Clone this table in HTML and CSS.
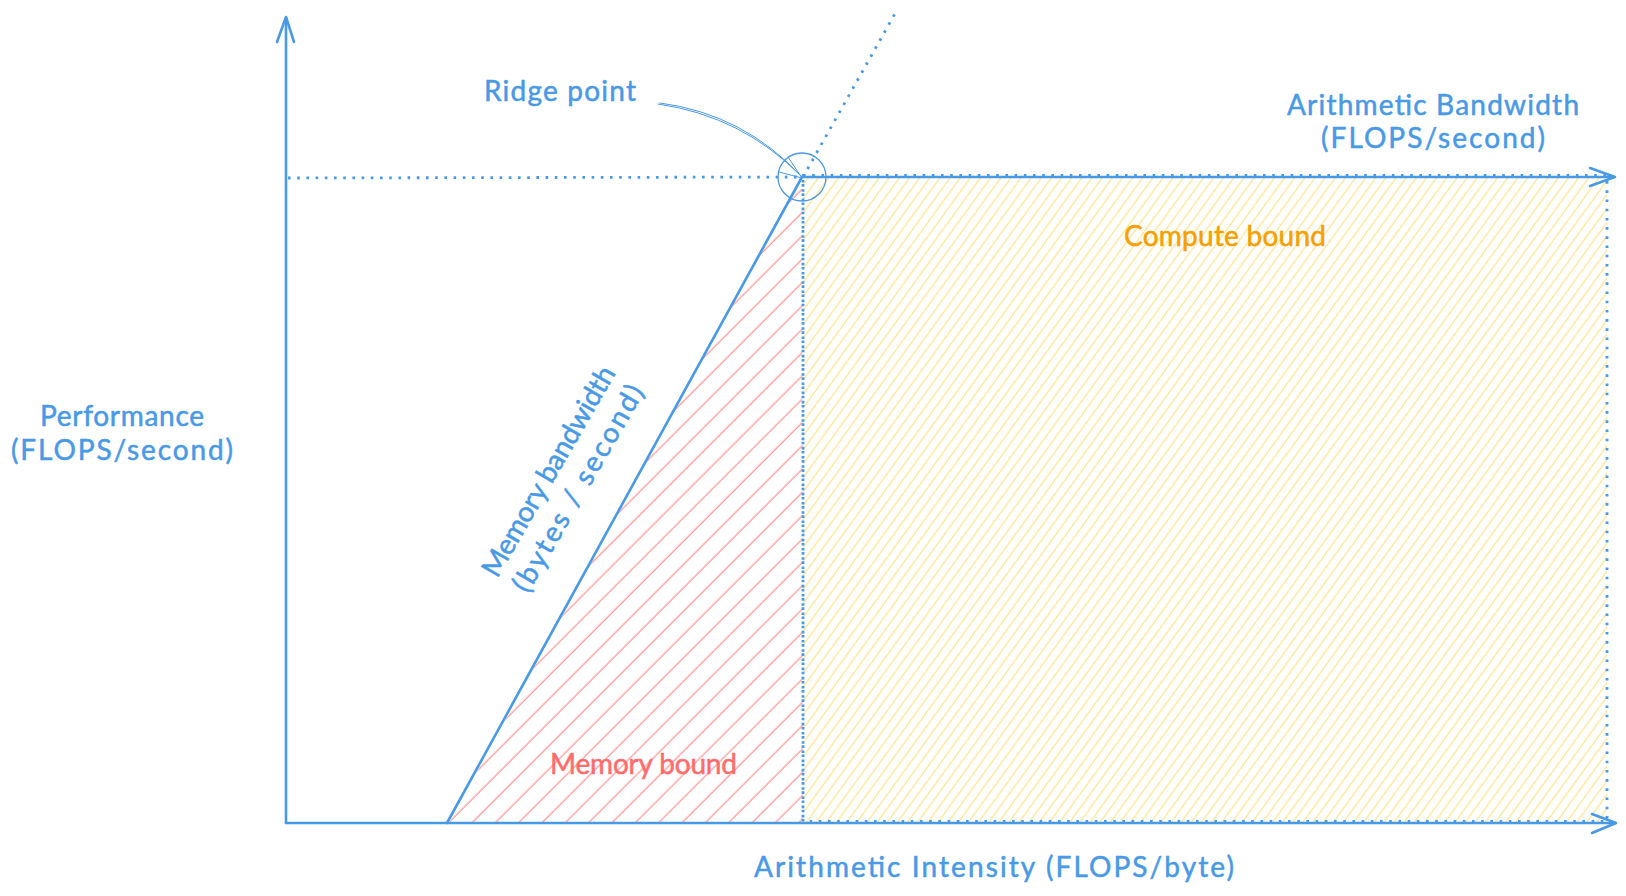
FILE: index.html
```html
<!DOCTYPE html>
<html lang="en">
<head>
<meta charset="utf-8">
<title>Roofline model</title>
<link rel="stylesheet" href="styles.css">
</head>
<body>
<svg class="canvas" width="1626" height="896" viewBox="0 0 1626 896" xmlns="http://www.w3.org/2000/svg">
  <defs>
    <pattern id="hatchRed" class="hatch-red" width="16.5" height="16.5" patternUnits="userSpaceOnUse" patternTransform="rotate(45)">
      <line x1="8" y1="0" x2="8" y2="16.5"></line>
    </pattern>
    <pattern id="hatchYellow" class="hatch-yellow" width="8.2" height="8.2" patternUnits="userSpaceOnUse" patternTransform="rotate(36)">
      <line x1="4" y1="0" x2="4" y2="8.2"></line>
    </pattern>
  </defs>

  <!-- regions -->
  <polygon class="fill-red" points="449,823 802,178 803,823"></polygon>
  <rect class="fill-yellow" x="803" y="178" width="804" height="645"></rect>

  <!-- dotted guides -->
  <line class="stroke dotted" x1="288" y1="178" x2="800" y2="177"></line>
  <line class="stroke dotted" x1="803" y1="177" x2="897" y2="10"></line>
  <line class="stroke dotted" x1="803" y1="180" x2="803" y2="821"></line>
  <rect class="stroke dotted" x="803" y="175.5" width="804" height="646"></rect>

  <!-- axes -->
  <path class="stroke" d="M286 823 L286 18"></path>
  <path class="stroke" d="M277 42 L286 17 L294 42"></path>
  <path class="stroke" d="M286 823 L1615 823"></path>
  <path class="stroke" d="M1592 814 L1616 823 L1592 833"></path>

  <!-- roofline -->
  <path class="stroke" d="M447 823 L802 177 L1614 177"></path>
  <path class="stroke" d="M1590 168 L1615 177 L1590 186"></path>

  <!-- ridge point marker -->
  <circle class="stroke thin" cx="802" cy="177" r="24"></circle>
  <path class="stroke thinner" d="M658 104 Q742 116 801 176"></path>
  <path class="stroke thinner" d="M660 103 Q744 114 802 177"></path>
  <path class="stroke thinner" d="M779 172 L802 178 L788 157"></path>

  <!-- labels -->
  <text class="label" x="484" y="101" textLength="152" lengthAdjust="spacing">Ridge point</text>
  <text class="label" x="1287" y="115" textLength="292" lengthAdjust="spacing">Arithmetic Bandwidth</text>
  <text class="label" x="1321" y="148" textLength="224" lengthAdjust="spacing">(FLOPS/second)</text>
  <text class="label label-orange" x="1124" y="246" textLength="202" lengthAdjust="spacing">Compute bound</text>
  <text class="label" x="40" y="426" textLength="164" lengthAdjust="spacing">Performance</text>
  <text class="label" x="11" y="460" textLength="222" lengthAdjust="spacing">(FLOPS/second)</text>
  <text class="label label-red" x="550" y="774" textLength="187" lengthAdjust="spacing">Memory bound</text>
  <text class="label" x="754" y="877" textLength="480" lengthAdjust="spacing">Arithmetic Intensity (FLOPS/byte)</text>

  <g transform="translate(562.8 479.5) rotate(-60)">
    <text class="label mid" x="0" y="-7" textLength="238" lengthAdjust="spacing">Memory bandwidth</text>
    <text class="label mid" x="0" y="27" textLength="234" lengthAdjust="spacing">(bytes / second)</text>
  </g>
</svg>
</body>
</html>
```

FILE: styles.css
```css
html, body {
  margin: 0;
  padding: 0;
  background: #ffffff;
}

.canvas {
  display: block;
  width: 1626px;
  height: 896px;
}

.stroke {
  fill: none;
  stroke: #4899e6;
  stroke-width: 2.6;
  stroke-linecap: round;
  stroke-linejoin: round;
}

.thin {
  stroke-width: 1.3;
}

.thinner {
  stroke-width: 1;
}

.dotted {
  stroke-width: 2.8;
  stroke-linecap: butt;
  stroke-dasharray: 2.6 6.6;
}

.fill-red {
  fill: url(#hatchRed);
}

.fill-yellow {
  fill: url(#hatchYellow);
}

.hatch-red line {
  stroke: #ff9090;
  stroke-width: 1.2;
}

.hatch-yellow line {
  stroke: #ffe28a;
  stroke-width: 1.2;
}

.label {
  font-family: Lato, "Open Sans", sans-serif;
  font-size: 28px;
  fill: #4899e6;
  stroke: #4899e6;
  stroke-width: 0.5;
}

.label-red {
  fill: #ff6b6b;
  stroke: #ff6b6b;
}

.label-orange {
  fill: #f59f00;
  stroke: #f59f00;
}

.mid {
  text-anchor: middle;
}
```
